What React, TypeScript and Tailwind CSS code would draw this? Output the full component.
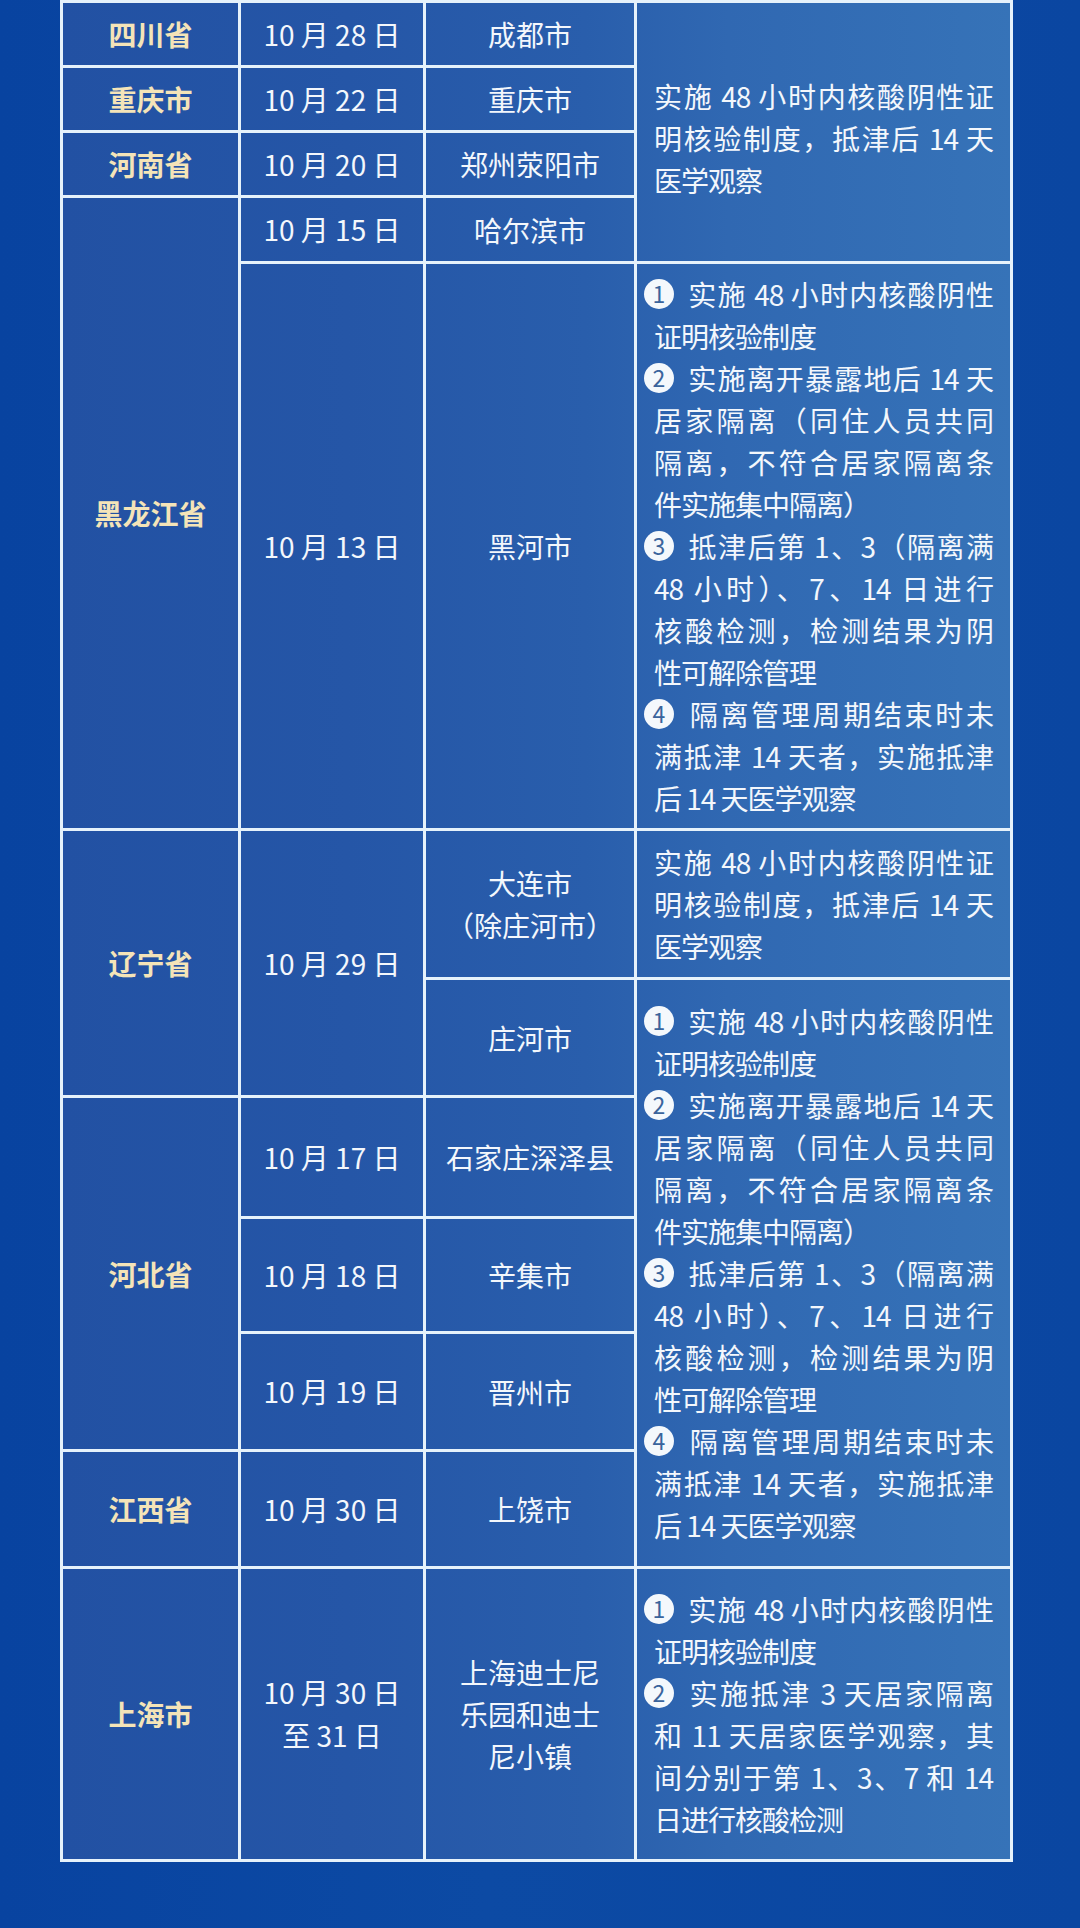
const line = "border-r-[3px] border-b-[3px] border-[#e6f2fb]";

const noteA = [["实施 48 小时内核酸阴性证", "明核验制度，抵津后 14 天", "医学观察"]];

const noteB = [
  ["① 实施 48 小时内核酸阴性", "证明核验制度"],
  ["② 实施离开暴露地后 14 天", "居家隔离（同住人员共同", "隔离，不符合居家隔离条", "件实施集中隔离）"],
  ["③ 抵津后第 1、3（隔离满", "48 小时）、7、14 日进行", "核酸检测，检测结果为阴", "性可解除管理"],
  ["④ 隔离管理周期结束时未", "满抵津 14 天者，实施抵津", "后 14 天医学观察"],
];

const noteE = [
  ["① 实施 48 小时内核酸阴性", "证明核验制度"],
  ["② 实施抵津 3 天居家隔离", "和 11 天居家医学观察，其", "间分别于第 1、3、7 和 14", "日进行核酸检测"],
];

const marks: Record<string, string> = { "①": "1", "②": "2", "③": "3", "④": "4" };

const provinces = [
  { pos: "col-start-1 row-start-1", text: "四川省" },
  { pos: "col-start-1 row-start-2", text: "重庆市" },
  { pos: "col-start-1 row-start-3", text: "河南省" },
  { pos: "col-start-1 row-start-4 row-span-2", text: "黑龙江省" },
  { pos: "col-start-1 row-start-6 row-span-2", text: "辽宁省" },
  { pos: "col-start-1 row-start-8 row-span-3", text: "河北省" },
  { pos: "col-start-1 row-start-11", text: "江西省" },
  { pos: "col-start-1 row-start-12", text: "上海市" },
];

const dates = [
  { pos: "col-start-2 row-start-1", lines: ["10 月 28 日"] },
  { pos: "col-start-2 row-start-2", lines: ["10 月 22 日"] },
  { pos: "col-start-2 row-start-3", lines: ["10 月 20 日"] },
  { pos: "col-start-2 row-start-4", lines: ["10 月 15 日"] },
  { pos: "col-start-2 row-start-5", lines: ["10 月 13 日"] },
  { pos: "col-start-2 row-start-6 row-span-2", lines: ["10 月 29 日"] },
  { pos: "col-start-2 row-start-8", lines: ["10 月 17 日"] },
  { pos: "col-start-2 row-start-9", lines: ["10 月 18 日"] },
  { pos: "col-start-2 row-start-10", lines: ["10 月 19 日"] },
  { pos: "col-start-2 row-start-11", lines: ["10 月 30 日"] },
  { pos: "col-start-2 row-start-12", lines: ["10 月 30 日", "至 31 日"] },
];

const cities = [
  { pos: "col-start-3 row-start-1", lines: ["成都市"] },
  { pos: "col-start-3 row-start-2", lines: ["重庆市"] },
  { pos: "col-start-3 row-start-3", lines: ["郑州荥阳市"] },
  { pos: "col-start-3 row-start-4", lines: ["哈尔滨市"] },
  { pos: "col-start-3 row-start-5", lines: ["黑河市"] },
  { pos: "col-start-3 row-start-6", lines: ["大连市", "（除庄河市）"] },
  { pos: "col-start-3 row-start-7", lines: ["庄河市"] },
  { pos: "col-start-3 row-start-8", lines: ["石家庄深泽县"] },
  { pos: "col-start-3 row-start-9", lines: ["辛集市"] },
  { pos: "col-start-3 row-start-10", lines: ["晋州市"] },
  { pos: "col-start-3 row-start-11", lines: ["上饶市"] },
  { pos: "col-start-3 row-start-12", lines: ["上海迪士尼", "乐园和迪士", "尼小镇"] },
];

// the first merged cell sits a little low in the source
const notes = [
  { pos: "col-start-4 row-start-1 row-span-4 pt-[12px]", paras: noteA },
  { pos: "col-start-4 row-start-5", paras: noteB },
  { pos: "col-start-4 row-start-6", paras: noteA },
  { pos: "col-start-4 row-start-7 row-span-5", paras: noteB },
  { pos: "col-start-4 row-start-12", paras: noteE },
];

function NoteLine({ text, justify }: { text: string; justify: boolean }) {
  const mark = marks[text[0]];
  const body = mark ? text.slice(2) : text;
  return (
    <div className={justify ? "text-justify [text-align-last:justify]" : "text-left"}>
      {mark && (
        <span className="inline-flex w-[30px] h-[30px] -ml-[10px] mr-[12px] items-center justify-center rounded-full bg-[#f4f8fc] text-[23px] leading-none tracking-normal text-[#3a649c] align-[3px]">
          {mark}
        </span>
      )}
      {body}
    </div>
  );
}

export default function App() {
  return (
    <div className="w-[1080px] h-[1928px] pl-[60px] bg-[linear-gradient(90deg,#0843a0_0%,#0c4aa4_45%,#0a46a1_100%)] font-['Noto_Sans_CJK_SC','Noto_Sans',sans-serif]">
      <div className="grid w-[953px] grid-cols-[178px_185px_211px_376px] grid-rows-[65px_65px_65px_66px_567px_149px_118px_121px_115px_118px_117px_293px] border-l-[3px] border-t-[3px] border-[#e6f2fb] bg-[linear-gradient(90deg,#2251a3_0%,#2556a7_30%,#295eac_55%,#3068b2_70%,#3673b8_100%)]">
        {provinces.map((p) => (
          <div key={p.pos} className={`${p.pos} ${line} flex items-center justify-center text-[28px] font-bold text-[#f4e4b8]`}>
            {p.text}
          </div>
        ))}
        {dates.map((d) => (
          <div key={d.pos} className={`${d.pos} ${line} flex flex-col items-center justify-center text-[28px] leading-[43px] text-[#f3f7fc]`}>
            {d.lines.map((l) => (
              <div key={l}>{l}</div>
            ))}
          </div>
        ))}
        {cities.map((c) => (
          <div key={c.pos} className={`${c.pos} ${line} flex flex-col items-center justify-center text-[28px] leading-[42px] text-[#f3f7fc]`}>
            {c.lines.map((l) => (
              <div key={l}>{l}</div>
            ))}
          </div>
        ))}
        {notes.map((n) => (
          <div key={n.pos} className={`${n.pos} ${line} flex flex-col justify-center px-[17px] text-[28px] leading-[42px] tracking-[-1px] text-[#f3f7fc]`}>
            {n.paras.map((para, i) => (
              <div key={i}>
                {para.map((l, j) => (
                  <NoteLine key={j} text={l} justify={j < para.length - 1} />
                ))}
              </div>
            ))}
          </div>
        ))}
      </div>
    </div>
  );
}
